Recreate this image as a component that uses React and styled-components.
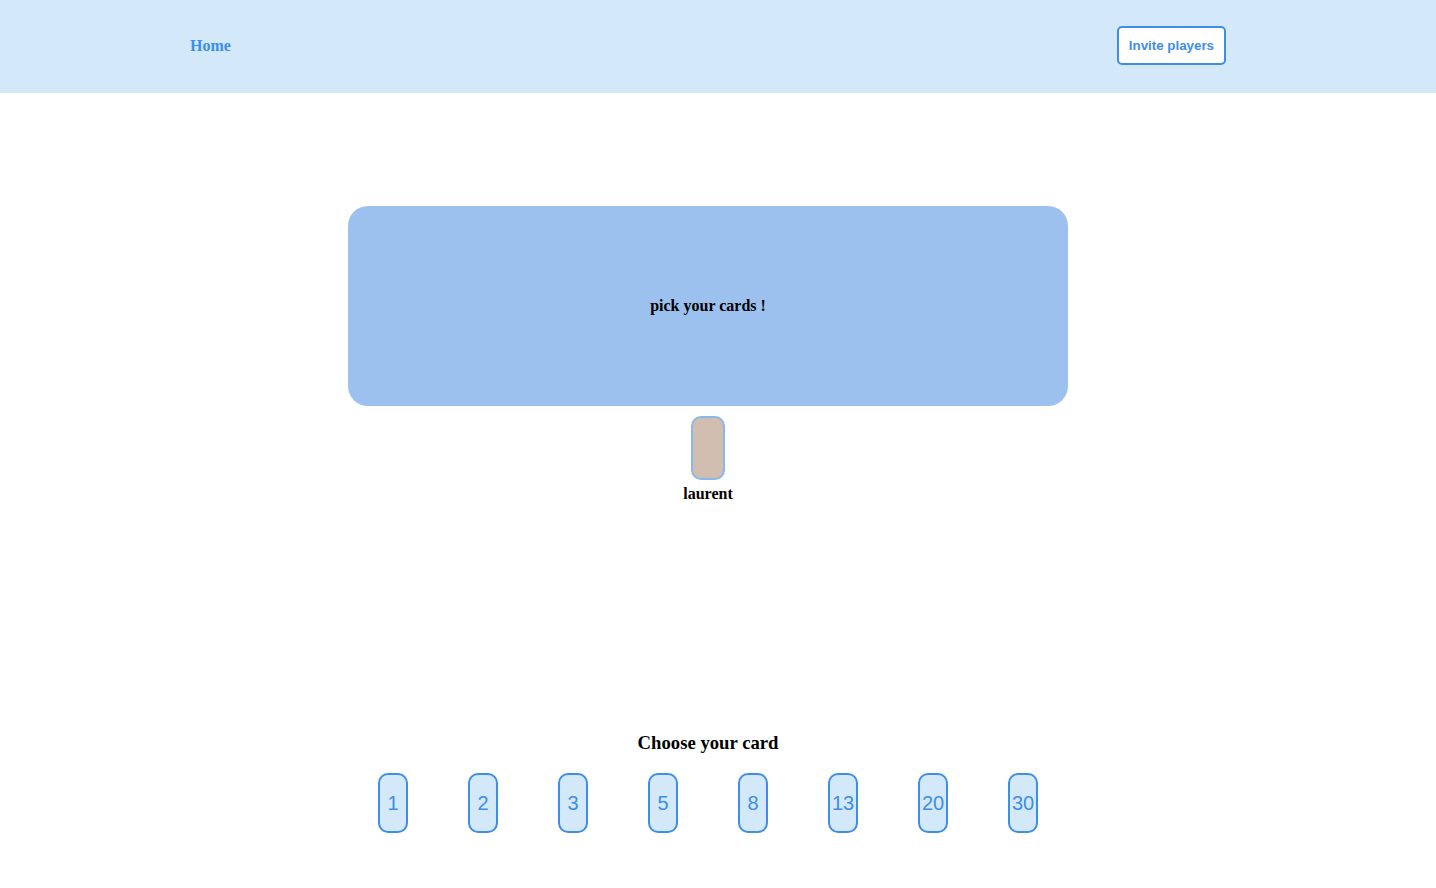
import React, { useState } from "react";
import styled, { createGlobalStyle, ThemeProvider } from "styled-components";

const theme = {
  accent: "#3e8ee8",
  pale: "#d3e9f9",
  table: "#9dc1ef",
  cardBack: "#d1beb0",
  cardEdge: "#8bb7ee",
};

const GlobalStyle = createGlobalStyle`
  * { box-sizing: border-box; }
  body {
    margin: 0;
    background: #ffffff;
    color: #000000;
    font-family: "Liberation Serif", "Times New Roman", serif;
    font-size: 16px;
    line-height: 18px;
  }
`;

const Header = styled.header`
  background: ${({ theme }) => theme.pale};
  padding: 26px 20px 28px 0;
`;

const Nav = styled.nav`
  display: flex;
  align-items: center;
  justify-content: space-between;
  max-width: 1036px;
  margin: 0 auto;
`;

const HomeLink = styled.a`
  color: ${({ theme }) => theme.accent};
  font-weight: bold;
  text-decoration: none;
`;

const InviteButton = styled.button`
  padding: 10px;
  border: 2px solid ${({ theme }) => theme.accent};
  border-radius: 5px;
  background: #ffffff;
  color: ${({ theme }) => theme.accent};
  font-family: "Liberation Sans", Arial, sans-serif;
  font-weight: bold;
  cursor: pointer;
`;

const Main = styled.main`
  display: flex;
  flex-direction: column;
  align-items: center;
  padding: 113px 20px 40px 0;
`;

const Board = styled.section`
  display: flex;
  flex-direction: column;
  align-items: center;
  width: 100%;
  max-width: 720px;
  min-height: 526px;
`;

const Table = styled.div`
  display: flex;
  align-items: center;
  justify-content: center;
  width: 100%;
  height: 200px;
  border-radius: 20px;
  background: ${({ theme }) => theme.table};
  font-weight: bold;
`;

const Player = styled.div`
  display: flex;
  flex-direction: column;
  align-items: center;
  gap: 5px;
  margin-top: 10px;
  font-weight: bold;
`;

const PlayerCard = styled.div`
  width: 34px;
  height: 64px;
  border: 2px solid ${({ theme }) => theme.cardEdge};
  border-radius: 10px;
  background: ${({ theme }) => theme.cardBack};
`;

const Chooser = styled.section`
  width: 100%;
  max-width: 720px;
`;

const ChooserTitle = styled.h3`
  margin: 0 0 19px;
  line-height: 22px;
  text-align: center;
`;

const Deck = styled.div`
  display: flex;
  justify-content: space-around;
`;

const CardButton = styled.button`
  display: flex;
  align-items: center;
  justify-content: center;
  width: 30px;
  height: 60px;
  padding: 0;
  border: 2px solid ${({ theme }) => theme.accent};
  border-radius: 10px;
  background: ${({ theme, $picked }) => ($picked ? theme.table : theme.pale)};
  color: ${({ theme }) => theme.accent};
  font-family: "Liberation Sans", Arial, sans-serif;
  font-size: 20px;
  cursor: pointer;
`;

const values = [1, 2, 3, 5, 8, 13, 20, 30];

export default function App() {
  const [picked, setPicked] = useState(null);

  return (
    <ThemeProvider theme={theme}>
      <GlobalStyle />
      <Header>
        <Nav>
          <HomeLink href="/">Home</HomeLink>
          <InviteButton type="button">Invite players</InviteButton>
        </Nav>
      </Header>
      <Main>
        <Board>
          <Table>pick your cards !</Table>
          <Player>
            <PlayerCard />
            <span>laurent</span>
          </Player>
        </Board>
        <Chooser>
          <ChooserTitle>Choose your card</ChooserTitle>
          <Deck>
            {values.map((value) => (
              <CardButton
                key={value}
                type="button"
                aria-pressed={picked === value}
                $picked={picked === value}
                onClick={() => setPicked(value)}
              >
                {value}
              </CardButton>
            ))}
          </Deck>
        </Chooser>
      </Main>
    </ThemeProvider>
  );
}
